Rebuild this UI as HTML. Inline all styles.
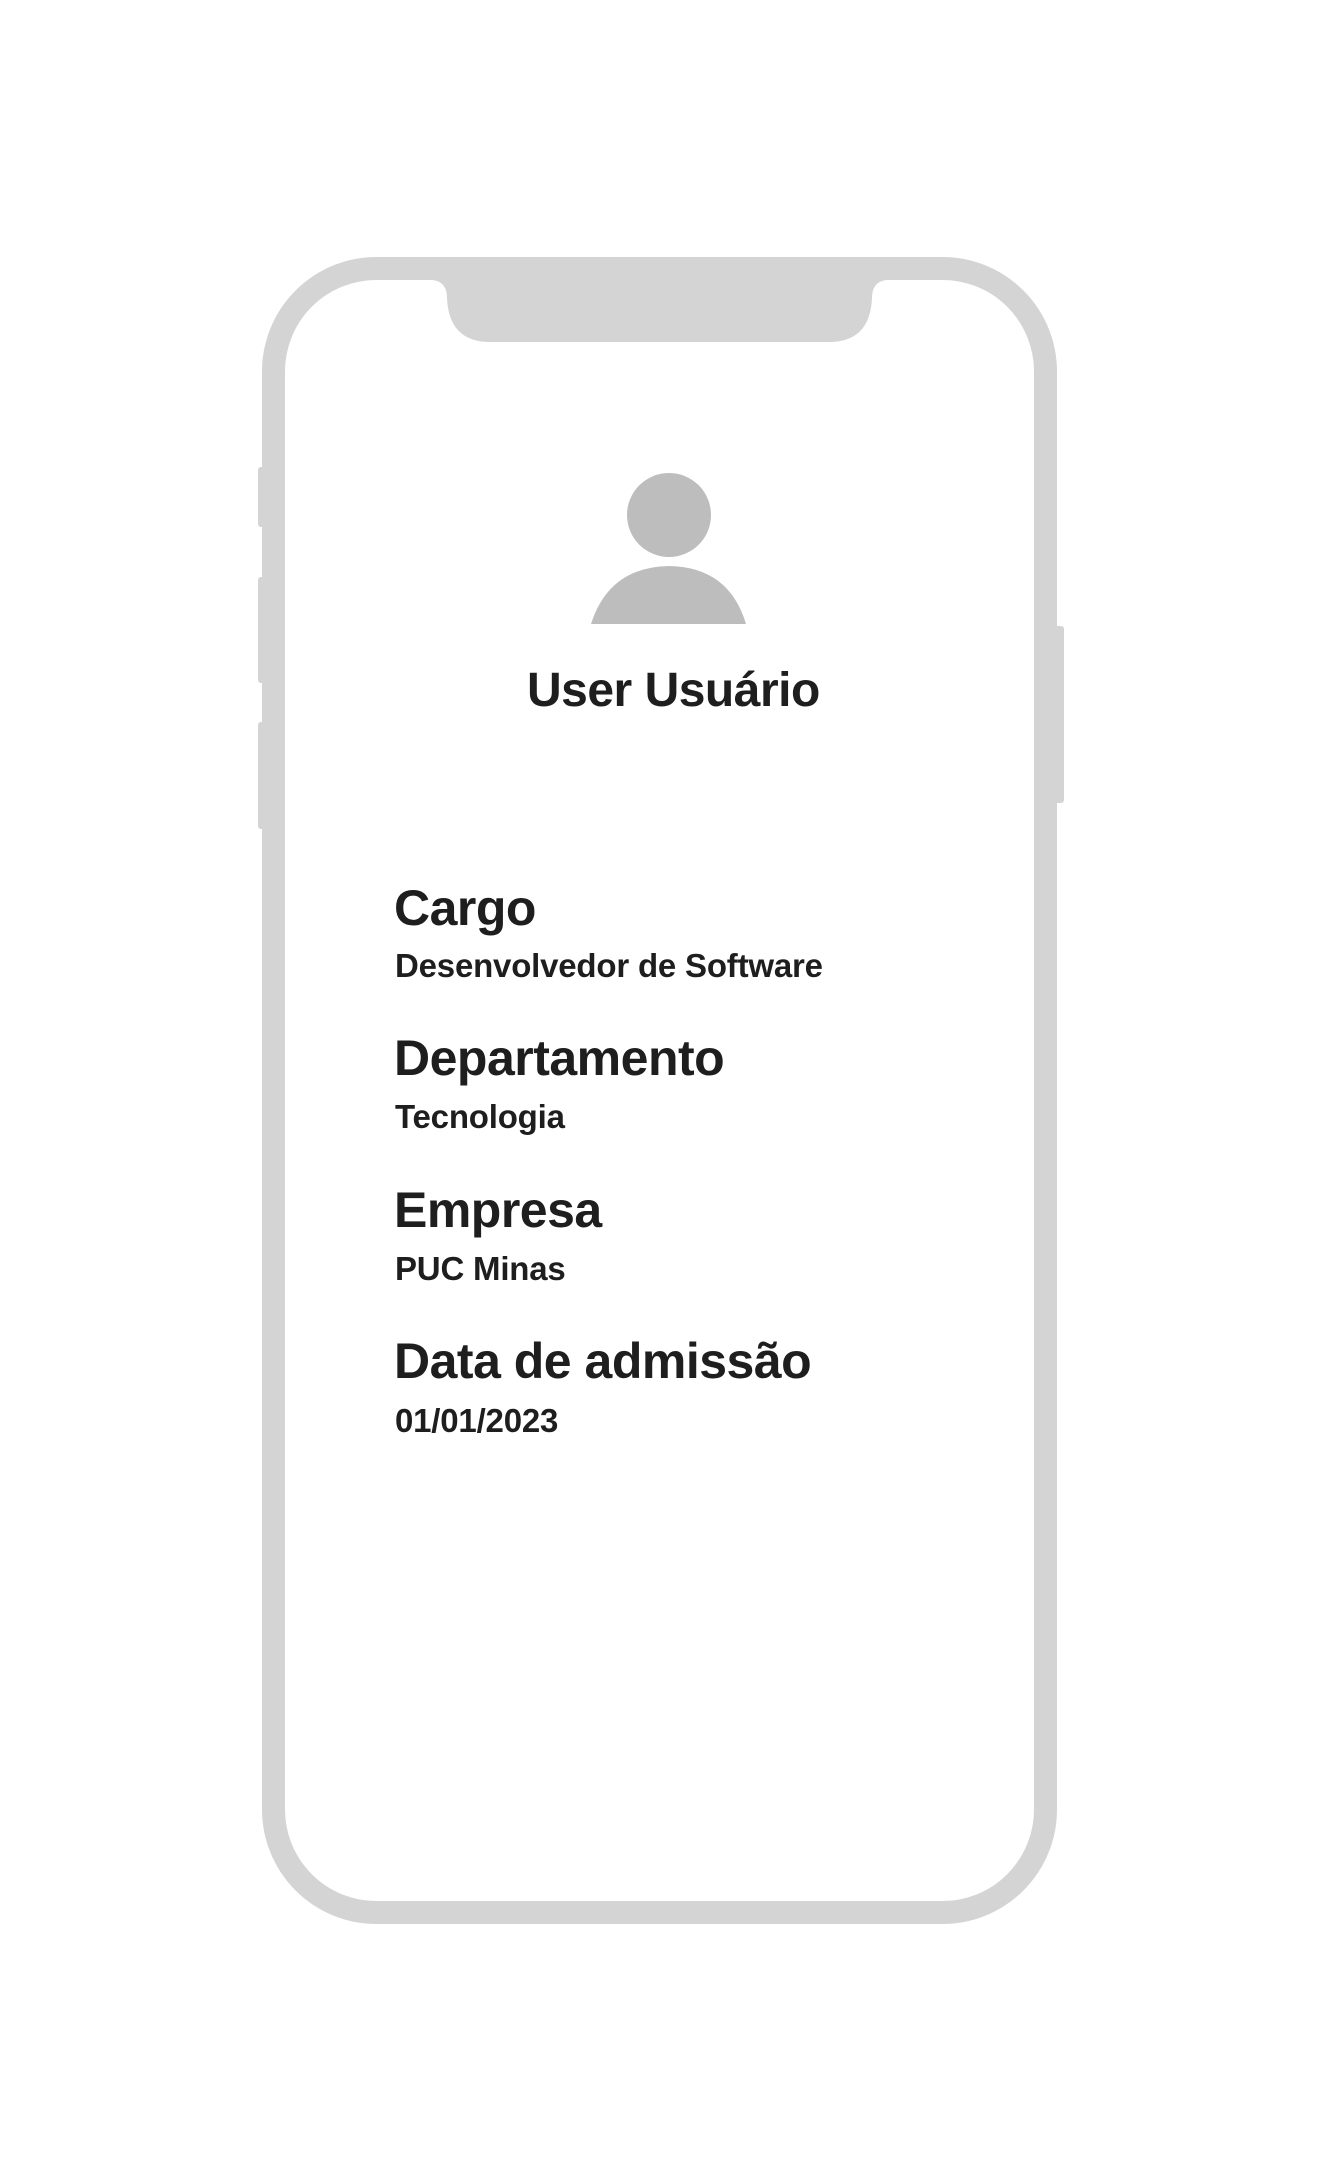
<!DOCTYPE html>
<html><head><meta charset="utf-8"><style>
html,body{margin:0;padding:0;background:#fff;}
body{width:1317px;height:2181px;position:relative;overflow:hidden;font-family:"Liberation Sans",Arial,sans-serif;color:#1e1e1e;}
.t{position:absolute;white-space:nowrap;font-weight:bold;line-height:1;}
.h{font-size:50px;left:394px;letter-spacing:-0.5px;}
.v{font-size:33px;left:395px;letter-spacing:-0.2px;}
</style></head><body>
<svg width="1317" height="2181" style="position:absolute;left:0;top:0">
  <rect x="258" y="467" width="8" height="60" rx="3" fill="#d4d4d4"/>
  <rect x="258" y="577" width="8" height="106" rx="3" fill="#d4d4d4"/>
  <rect x="258" y="722" width="8" height="107" rx="3" fill="#d4d4d4"/>
  <rect x="1053" y="626" width="11" height="177" rx="3" fill="#d4d4d4"/>
  <rect x="273.5" y="268.5" width="772" height="1644" rx="103" fill="#fff" stroke="#d4d4d4" stroke-width="23"/>
  <path d="M433 280 Q447 282 447 298 Q449 342 490 342 L829 342 Q870 342 872 298 Q872 282 886 280 Z" fill="#d4d4d4"/>
  <circle cx="669" cy="515" r="42" fill="#bdbdbd"/>
  <path d="M591 624 Q609 567 669 566 Q729 567 746 624 Z" fill="#bdbdbd"/>
</svg>
<div class="t" style="font-size:48px;left:527px;top:667px;letter-spacing:-0.5px;">User Usuário</div>
<div class="t h" style="top:883px">Cargo</div>
<div class="t v" style="top:949px">Desenvolvedor de Software</div>
<div class="t h" style="top:1033px">Departamento</div>
<div class="t v" style="top:1100px">Tecnologia</div>
<div class="t h" style="top:1185px">Empresa</div>
<div class="t v" style="top:1252px">PUC Minas</div>
<div class="t h" style="top:1336px">Data de admissão</div>
<div class="t v" style="top:1404px">01/01/2023</div>
</body></html>
